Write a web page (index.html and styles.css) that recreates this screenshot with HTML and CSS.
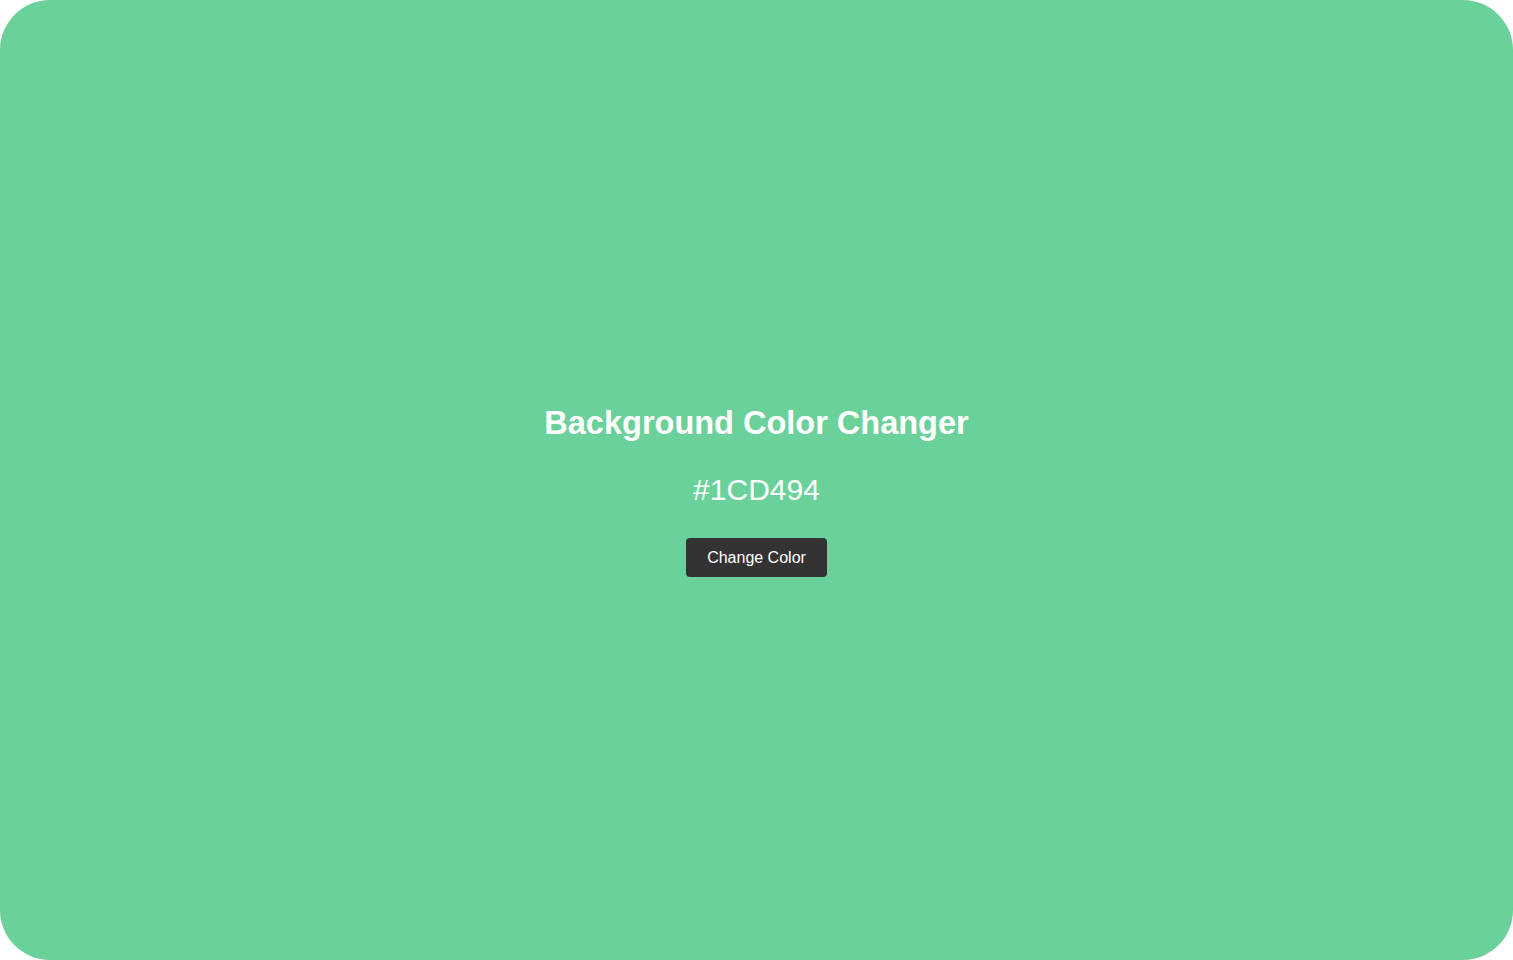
FILE: index.html
```html
<!DOCTYPE html>
<html>
<head>
<meta charset="utf-8">
<link rel="stylesheet" href="styles.css">
</head>
<body>
<div class="app">
  <h1 class="title">Background Color Changer</h1>
  <p class="hex">#1CD494</p>
  <button class="btn">Change Color</button>
</div>
</body>
</html>
```
FILE: styles.css
```css
html, body {
  margin: 0;
  padding: 0;
  height: 100%;
  background: #ffffff;
}
.app {
  height: 960px;
  box-sizing: border-box;
  padding-top: 22px;
  background: #6bd19a;
  border-radius: 50px;
  display: flex;
  flex-direction: column;
  align-items: center;
  justify-content: center;
  font-family: "Liberation Sans", Arial, sans-serif;
  color: #ffffff;
}
.title {
  font-size: 32.5px;
  font-weight: bold;
  margin: 0;
}
.hex {
  font-size: 30px;
  margin: 31px 0 31px;
}
.btn {
  font-family: "Liberation Sans", Arial, sans-serif;
  font-size: 16px;
  color: #ffffff;
  background: #333333;
  border: none;
  border-radius: 4px;
  width: 141px;
  height: 39px;
  padding: 0;
}
```
